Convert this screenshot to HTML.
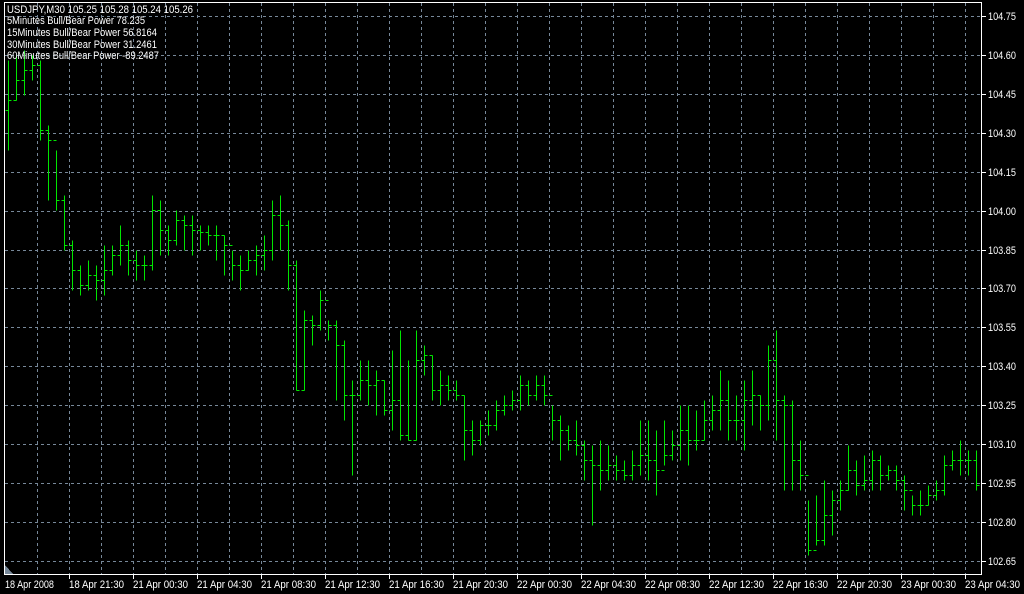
<!DOCTYPE html>
<html><head><meta charset="utf-8"><style>
html,body{margin:0;padding:0;background:#000;width:1024px;height:594px;overflow:hidden}
svg{display:block}
text{font-family:"Liberation Sans",sans-serif;font-size:11px;fill:#fff}
</style></head><body>
<svg width="1024" height="594" viewBox="0 0 1024 594" shape-rendering="crispEdges">
<g stroke="#778899" stroke-width="1" stroke-dasharray="3,3">
<path d="M5 16.5H982M5 55.5H982M5 94.5H982M5 133.5H982M5 172.5H982M5 211.5H982M5 250.5H982M5 288.5H982M5 327.5H982M5 366.5H982M5 405.5H982M5 444.5H982M5 483.5H982M5 522.5H982M5 561.5H982"/>
<path d="M37.5 3V574M69.5 3V574M101.5 3V574M133.5 3V574M165.5 3V574M197.5 3V574M229.5 3V574M261.5 3V574M293.5 3V574M325.5 3V574M357.5 3V574M389.5 3V574M421.5 3V574M453.5 3V574M485.5 3V574M517.5 3V574M549.5 3V574M581.5 3V574M613.5 3V574M645.5 3V574M677.5 3V574M709.5 3V574M741.5 3V574M773.5 3V574M805.5 3V574M837.5 3V574M869.5 3V574M901.5 3V574M933.5 3V574M965.5 3V574"/>
</g>
<g stroke="#00e600" stroke-width="1" fill="none" transform="translate(0.5,0.5)">
<path d="M8 60V150M5 110h3M8 100h3M16 55V100M13 100h3M16 80h3M24 50V95M21 80h3M24 70h3M32 55V80M29 70h3M32 65h3M40 60V140M37 65h3M40 130h3M48 125V200M45 130h3M48 140h3M56 150V210M53 140h3M56 200h3M64 195V250M61 200h3M64 245h3M72 240V290M69 245h3M72 270h3M80 265V295M77 270h3M80 285h3M88 260V290M85 285h3M88 275h3M96 265V300M93 275h3M96 280h3M104 245V295M101 280h3M104 270h3M112 245V275M109 270h3M112 255h3M120 225V265M117 255h3M120 245h3M128 240V275M125 245h3M128 260h3M136 250V280M133 260h3M136 265h3M144 255V280M141 265h3M144 265h3M152 195V270M149 265h3M152 210h3M160 200V255M157 210h3M160 230h3M168 225V255M165 230h3M168 240h3M176 210V245M173 240h3M176 220h3M184 215V250M181 220h3M184 225h3M192 215V255M189 225h3M192 230h3M200 225V250M197 230h3M200 232h3M208 225V245M205 232h3M208 235h3M216 225V260M213 235h3M216 235h3M224 235V275M221 235h3M224 245h3M232 250V280M229 245h3M232 265h3M240 255V290M237 265h3M240 270h3M248 250V270M245 270h3M248 260h3M256 245V275M253 260h3M256 255h3M264 235V270M261 255h3M264 250h3M272 200V260M269 250h3M272 215h3M280 195V250M277 215h3M280 225h3M288 220V290M285 225h3M288 265h3M296 260V390M293 265h3M296 390h3M304 310V390M301 390h3M304 320h3M312 315V345M309 320h3M312 325h3M320 290V330M317 325h3M320 300h3M328 320V340M325 300h3M328 325h3M336 320V400M333 325h3M336 345h3M344 340V420M341 345h3M344 395h3M352 380V475M349 395h3M352 395h3M360 360V400M357 395h3M360 380h3M368 360V405M365 380h3M368 385h3M376 370V415M373 385h3M376 380h3M384 380V415M381 380h3M384 410h3M392 350V430M389 410h3M392 400h3M400 330V440M397 400h3M400 435h3M408 360V440M405 435h3M408 440h3M416 330V440M413 440h3M416 360h3M424 345V375M421 360h3M424 355h3M432 355V400M429 355h3M432 390h3M440 370V405M437 390h3M440 385h3M448 375V400M445 385h3M448 390h3M456 380V400M453 390h3M456 395h3M464 395V460M461 395h3M464 430h3M472 420V455M469 430h3M472 440h3M480 420V445M477 440h3M480 425h3M488 410V435M485 425h3M488 425h3M496 400V430M493 425h3M496 410h3M504 395V415M501 410h3M504 405h3M512 390V410M509 405h3M512 400h3M520 375V410M517 400h3M520 385h3M528 380V405M525 385h3M528 395h3M536 375V400M533 395h3M536 385h3M544 375V405M541 385h3M544 395h3M552 405V440M549 395h3M552 420h3M560 415V460M557 420h3M560 430h3M568 425V450M565 430h3M568 440h3M576 420V455M573 440h3M576 445h3M584 440V480M581 445h3M584 460h3M592 445V525M589 460h3M592 465h3M600 440V490M597 465h3M600 470h3M608 445V480M605 470h3M608 465h3M616 455V480M613 465h3M616 470h3M624 460V480M621 470h3M624 475h3M632 450V480M629 475h3M632 465h3M640 420V475M637 465h3M640 455h3M648 420V480M645 455h3M648 460h3M656 430V495M653 460h3M656 470h3M664 420V465M661 470h3M664 455h3M672 430V460M669 455h3M672 445h3M680 405V460M677 445h3M680 430h3M688 405V465M685 430h3M688 440h3M696 410V450M693 440h3M696 440h3M704 400V440M701 440h3M704 420h3M712 395V430M709 420h3M712 410h3M720 370V430M717 410h3M720 400h3M728 380V440M725 400h3M728 420h3M736 395V440M733 420h3M736 420h3M744 380V450M741 420h3M744 400h3M752 370V425M749 400h3M752 395h3M760 395V430M757 395h3M760 405h3M768 345V420M765 405h3M768 360h3M776 330V440M773 360h3M776 400h3M784 395V490M781 400h3M784 405h3M792 400V490M789 405h3M792 460h3M800 440V490M797 460h3M800 475h3M808 500V555M805 475h3M808 550h3M816 495V545M813 550h3M816 540h3M824 480V545M821 540h3M824 515h3M832 490V535M829 515h3M832 500h3M840 480V510M837 500h3M840 490h3M848 445V490M845 490h3M848 470h3M856 460V495M853 470h3M856 485h3M864 455V490M861 485h3M864 480h3M872 450V490M869 480h3M872 460h3M880 455V490M877 460h3M880 475h3M888 465V480M885 475h3M888 470h3M896 465V490M893 470h3M896 480h3M904 475V510M901 480h3M904 490h3M912 495V515M909 490h3M912 505h3M920 490V515M917 505h3M920 505h3M928 485V505M925 505h3M928 495h3M936 480V500M933 495h3M936 490h3M944 455V495M941 490h3M944 465h3M952 450V470M949 465h3M952 460h3M960 440V475M957 460h3M960 460h3M968 450V475M965 460h3M968 460h3M976 450V490M973 460h3M976 485h3"/>
</g>
<path d="M5 565 L13 574 L5 574Z" fill="#778899"/>
<g stroke="#fff" stroke-width="1" fill="none">
<rect x="4.5" y="2.5" width="977" height="572"/>
<path d="M982 16.5h4M982 55.5h4M982 94.5h4M982 133.5h4M982 172.5h4M982 211.5h4M982 250.5h4M982 288.5h4M982 327.5h4M982 366.5h4M982 405.5h4M982 444.5h4M982 483.5h4M982 522.5h4M982 561.5h4"/>
<path d="M69.5 575v4M133.5 575v4M197.5 575v4M261.5 575v4M325.5 575v4M389.5 575v4M453.5 575v4M517.5 575v4M581.5 575v4M645.5 575v4M709.5 575v4M773.5 575v4M837.5 575v4M901.5 575v4M965.5 575v4"/>
</g>
<g lengthAdjust="spacingAndGlyphs">
<text x="988" y="20" textLength="28" lengthAdjust="spacingAndGlyphs">104.75</text><text x="988" y="59" textLength="28" lengthAdjust="spacingAndGlyphs">104.60</text><text x="988" y="98" textLength="28" lengthAdjust="spacingAndGlyphs">104.45</text><text x="988" y="137" textLength="28" lengthAdjust="spacingAndGlyphs">104.30</text><text x="988" y="176" textLength="28" lengthAdjust="spacingAndGlyphs">104.15</text><text x="988" y="215" textLength="28" lengthAdjust="spacingAndGlyphs">104.00</text><text x="988" y="254" textLength="28" lengthAdjust="spacingAndGlyphs">103.85</text><text x="988" y="292" textLength="28" lengthAdjust="spacingAndGlyphs">103.70</text><text x="988" y="331" textLength="28" lengthAdjust="spacingAndGlyphs">103.55</text><text x="988" y="370" textLength="28" lengthAdjust="spacingAndGlyphs">103.40</text><text x="988" y="409" textLength="28" lengthAdjust="spacingAndGlyphs">103.25</text><text x="988" y="448" textLength="28" lengthAdjust="spacingAndGlyphs">103.10</text><text x="988" y="487" textLength="28" lengthAdjust="spacingAndGlyphs">102.95</text><text x="988" y="526" textLength="28" lengthAdjust="spacingAndGlyphs">102.80</text><text x="988" y="565" textLength="28" lengthAdjust="spacingAndGlyphs">102.65</text>
</g>
<g>
<text x="5" y="588" textLength="49" lengthAdjust="spacingAndGlyphs">18 Apr 2008</text>
<text x="69" y="588" textLength="55" lengthAdjust="spacingAndGlyphs">18 Apr 21:30</text>
<text x="133" y="588" textLength="55" lengthAdjust="spacingAndGlyphs">21 Apr 00:30</text>
<text x="197" y="588" textLength="55" lengthAdjust="spacingAndGlyphs">21 Apr 04:30</text>
<text x="261" y="588" textLength="55" lengthAdjust="spacingAndGlyphs">21 Apr 08:30</text>
<text x="325" y="588" textLength="55" lengthAdjust="spacingAndGlyphs">21 Apr 12:30</text>
<text x="389" y="588" textLength="55" lengthAdjust="spacingAndGlyphs">21 Apr 16:30</text>
<text x="453" y="588" textLength="55" lengthAdjust="spacingAndGlyphs">21 Apr 20:30</text>
<text x="517" y="588" textLength="55" lengthAdjust="spacingAndGlyphs">22 Apr 00:30</text>
<text x="581" y="588" textLength="55" lengthAdjust="spacingAndGlyphs">22 Apr 04:30</text>
<text x="645" y="588" textLength="55" lengthAdjust="spacingAndGlyphs">22 Apr 08:30</text>
<text x="709" y="588" textLength="55" lengthAdjust="spacingAndGlyphs">22 Apr 12:30</text>
<text x="773" y="588" textLength="55" lengthAdjust="spacingAndGlyphs">22 Apr 16:30</text>
<text x="837" y="588" textLength="55" lengthAdjust="spacingAndGlyphs">22 Apr 20:30</text>
<text x="901" y="588" textLength="55" lengthAdjust="spacingAndGlyphs">23 Apr 00:30</text>
<text x="965" y="588" textLength="55" lengthAdjust="spacingAndGlyphs">23 Apr 04:30</text>
</g>
<g style="font-size:10.5px">
<text x="7" y="13" textLength="186" lengthAdjust="spacingAndGlyphs">USDJPY,M30  105.25 105.28 105.24 105.26</text>
<text x="7" y="24" textLength="138" lengthAdjust="spacingAndGlyphs">5Minutes Bull/Bear Power 78.235</text>
<text x="7" y="36" textLength="150" lengthAdjust="spacingAndGlyphs">15Minutes Bull/Bear Power 56.8164</text>
<text x="7" y="48" textLength="150" lengthAdjust="spacingAndGlyphs">30Minutes Bull/Bear Power 31.2461</text>
<text x="7" y="59" textLength="152" lengthAdjust="spacingAndGlyphs">60Minutes Bull/Bear Power -89.2487</text>
</g>
</svg>
</body></html>
